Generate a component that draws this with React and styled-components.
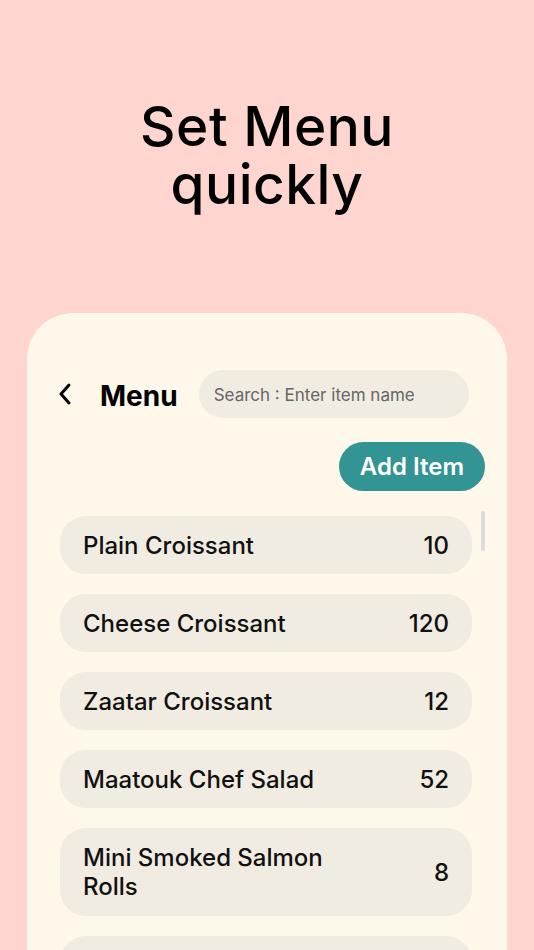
import styled, { createGlobalStyle } from "styled-components";

const GlobalStyle = createGlobalStyle`
  html, body {
    margin: 0;
    padding: 0;
    background: #ffd5d0;
    overflow: hidden;
  }
  * { box-sizing: border-box; }
`;

const Page = styled.div`
  width: 534px;
  height: 950px;
  background: #ffd5d0;
  font-family: Inter, "Noto Sans", sans-serif;
  display: flex;
  flex-direction: column;
  align-items: center;
  overflow: hidden;
`;

const Headline = styled.h1`
  margin: 97px 0 0;
  font-family: Inter, "Noto Sans", sans-serif;
  font-weight: 500;
  font-size: 55px;
  line-height: 58px;
  letter-spacing: 0.5px;
  color: #000;
  text-align: center;
`;

const Card = styled.div`
  margin-top: 100px;
  width: 480px;
  flex: 1;
  align-self: flex-start;
  margin-left: 27px;
  background: #fef8ea;
  border-radius: 46px 46px 0 0;
  padding: 57px 22px 0 28px;
  display: flex;
  flex-direction: column;
  position: relative;
`;

const Header = styled.div`
  display: flex;
  align-items: center;
  padding-right: 16px;
`;

const BackButton = styled.button`
  border: none;
  background: none;
  padding: 0;
  width: 20px;
  height: 26px;
  display: flex;
  align-items: center;
  justify-content: center;
  cursor: pointer;
`;

const Title = styled.span`
  margin-left: 25px;
  padding-top: 3px;
  font-size: 28px;
  font-weight: 700;
  color: #000;
`;

const Search = styled.input`
  margin-left: 21px;
  flex: 1;
  min-width: 0;
  height: 48px;
  border: none;
  outline: none;
  border-radius: 24px;
  background: #f0ece2;
  padding: 2px 15px 0;
  font-family: Inter, "Noto Sans", sans-serif;
  font-size: 17px;
  color: #333;
  &::placeholder {
    color: #666;
  }
`;

const Actions = styled.div`
  display: flex;
  justify-content: flex-end;
  margin-top: 24px;
`;

const AddButton = styled.button`
  height: 49px;
  padding: 0 21px;
  border: none;
  border-radius: 25px;
  background: #339494;
  color: #fff;
  font-family: Inter, "Noto Sans", sans-serif;
  font-size: 24px;
  font-weight: 600;
  cursor: pointer;
`;

const List = styled.div`
  margin-top: 25px;
  display: flex;
  flex-direction: column;
  gap: 20px;
  padding-left: 5px;
  padding-right: 13px;
`;

const Item = styled.div`
  min-height: 58px;
  border-radius: 26px;
  background: #f0ece2;
  display: flex;
  align-items: center;
  justify-content: space-between;
  padding: 0 23px;
  font-size: 24px;
  font-weight: 500;
  color: #111;
  line-height: 29px;
`;

const ItemName = styled.span`
  max-width: 260px;
  padding: ${(p) => (p.$wrap ? "15px 0" : "0")};
`;

const ItemQty = styled.span``;

const Scrollbar = styled.div`
  position: absolute;
  right: 22px;
  top: 198px;
  width: 4px;
  height: 40px;
  border-radius: 2px;
  background: #dcdcdc;
`;

const items = [
  { name: "Plain Croissant", qty: 10 },
  { name: "Cheese Croissant", qty: 120 },
  { name: "Zaatar Croissant", qty: 12 },
  { name: "Maatouk Chef Salad", qty: 52 },
  { name: "Mini Smoked Salmon Rolls", qty: 8, wrap: true },
  { name: "Spinach Fatayer", qty: 20 },
];

export default function App() {
  return (
    <Page>
      <GlobalStyle />
      <Headline>
        Set Menu
        <br />
        quickly
      </Headline>
      <Card>
        <Header>
          <BackButton aria-label="back">
            <svg width="14" height="24" viewBox="0 0 14 24" fill="none">
              <path
                d="M11 3L3 12L11 21"
                stroke="#000"
                strokeWidth="3"
                strokeLinecap="round"
                strokeLinejoin="round"
              />
            </svg>
          </BackButton>
          <Title>Menu</Title>
          <Search placeholder="Search : Enter item name" />
        </Header>
        <Actions>
          <AddButton>Add Item</AddButton>
        </Actions>
        <List>
          {items.map((item) => (
            <Item key={item.name}>
              <ItemName $wrap={item.wrap}>{item.name}</ItemName>
              <ItemQty>{item.qty}</ItemQty>
            </Item>
          ))}
        </List>
        <Scrollbar />
      </Card>
    </Page>
  );
}
